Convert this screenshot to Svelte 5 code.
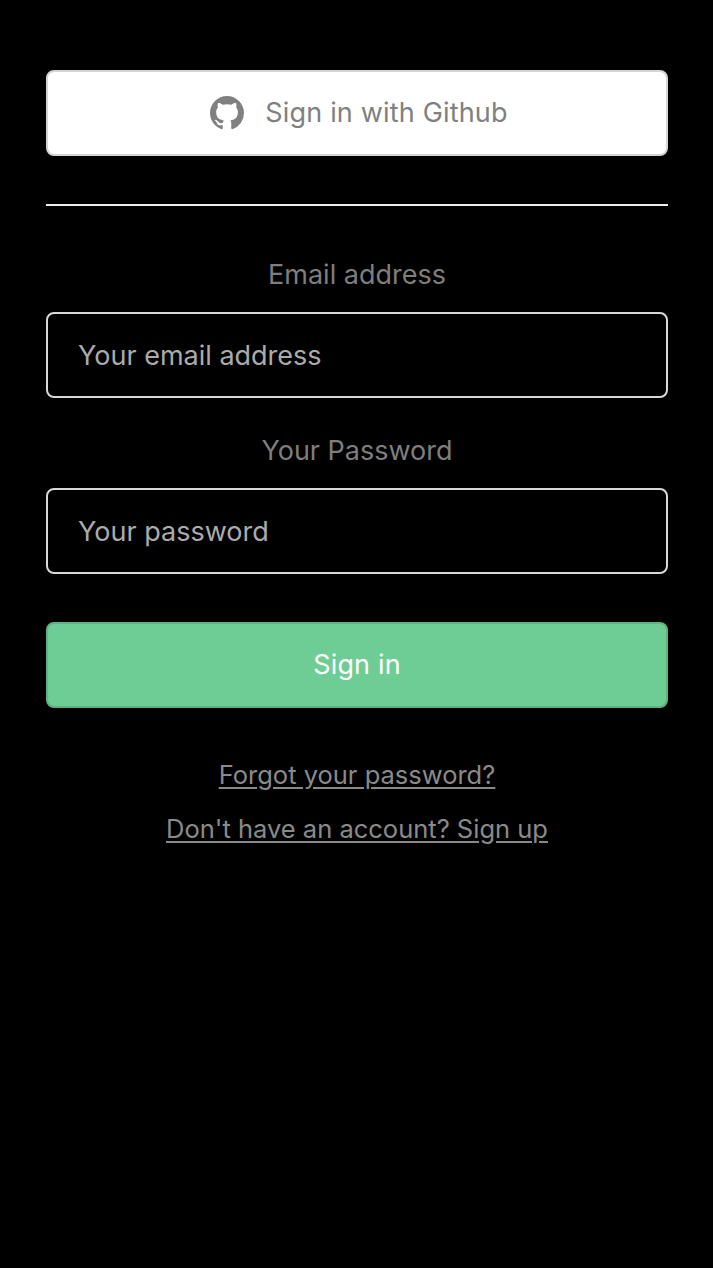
<script>
  let email = $state('');
  let password = $state('');
</script>

<main class="auth">
  <button class="btn github" type="button">
    <svg class="gh" viewBox="0 0 16 16" width="34" height="34" aria-hidden="true">
      <path fill="currentColor" d="M8 0C3.58 0 0 3.58 0 8c0 3.54 2.29 6.53 5.47 7.59.4.07.55-.17.55-.38 0-.19-.01-.82-.01-1.49-2.01.37-2.53-.49-2.69-.94-.09-.23-.48-.94-.82-1.13-.28-.15-.68-.52-.01-.53.63-.01 1.08.58 1.23.82.72 1.21 1.87.87 2.33.66.07-.52.28-.87.51-1.07-1.78-.2-3.64-.89-3.64-3.95 0-.87.31-1.59.82-2.15-.08-.2-.36-1.02.08-2.12 0 0 .67-.21 2.2.82.64-.18 1.32-.27 2-.27s1.36.09 2 .27c1.53-1.04 2.2-.82 2.2-.82.44 1.1.16 1.92.08 2.12.51.56.82 1.27.82 2.15 0 3.07-1.87 3.75-3.65 3.95.29.25.54.73.54 1.48 0 1.07-.01 1.93-.01 2.2 0 .21.15.46.55.38A8.01 8.01 0 0 0 16 8c0-4.42-3.58-8-8-8z"/>
    </svg>
    <span class="gh-label">Sign in with Github</span>
  </button>

  <hr class="divider" />

  <form class="form" onsubmit={(e) => e.preventDefault()}>
    <div class="field">
      <label for="email">Email address</label>
      <input id="email" type="email" placeholder="Your email address" bind:value={email} />
    </div>
    <div class="field">
      <label for="password">Your Password</label>
      <input id="password" type="password" placeholder="Your password" bind:value={password} />
    </div>
    <button class="btn primary" type="submit"><span>Sign in</span></button>
  </form>

  <nav class="links">
    <a href="#forgot">Forgot your password?</a>
    <a href="#signup">Don't have an account? Sign up</a>
  </nav>
</main>

<style>
  :global(body) {
    background: #000;
    margin: 0;
    font-family: Inter, "Liberation Sans", sans-serif;
  }
  .auth {
    box-sizing: border-box;
    width: 713px;
    min-height: 1268px;
    padding: 70px 45px 0 46px;
    background: #000;
  }
  .btn {
    box-sizing: border-box;
    display: flex;
    align-items: center;
    justify-content: center;
    width: 100%;
    height: 86px;
    border-radius: 8px;
    font: inherit;
    font-size: 27px;
    letter-spacing: 0.15px;
    padding: 0;
  }
  .btn span {
    padding-bottom: 2px;
  }
  .github {
    gap: 21px;
    padding-left: 4px;
    background: #fff;
    border: 2px solid #d4d4d4;
    color: #808080;
    letter-spacing: 0.17px;
  }
  .gh {
    flex: none;
  }
  .divider {
    height: 2px;
    margin: 48px 0 0;
    border: 0;
    background: #ededed;
  }
  .form {
    display: flex;
    flex-direction: column;
    margin-top: 50px;
  }
  .field {
    display: flex;
    flex-direction: column;
    margin-bottom: 34px;
  }
  .field + .field {
    margin-bottom: 48px;
  }
  label {
    height: 38px;
    margin-bottom: 18px;
    font-size: 27px;
    line-height: 38px;
    text-align: center;
    color: #7e7e7e;
  }
  input {
    box-sizing: border-box;
    width: 100%;
    height: 86px;
    padding: 0 30px;
    background: #000;
    border: 2px solid #d8d8d8;
    border-radius: 8px;
    font: inherit;
    font-size: 27px;
    color: #ababab;
    outline: none;
  }
  input::placeholder {
    color: #ababab;
    opacity: 1;
  }
  .primary {
    background: #6ecd94;
    border: 2px solid #5fb283;
    color: #fff;
  }
  .links {
    display: flex;
    flex-direction: column;
    align-items: center;
    gap: 16px;
    margin-top: 48px;
  }
  .links a {
    font-size: 25.5px;
    line-height: 38px;
    color: #8a8a8a;
    text-decoration: underline;
    text-underline-offset: 3px;
  }
</style>
